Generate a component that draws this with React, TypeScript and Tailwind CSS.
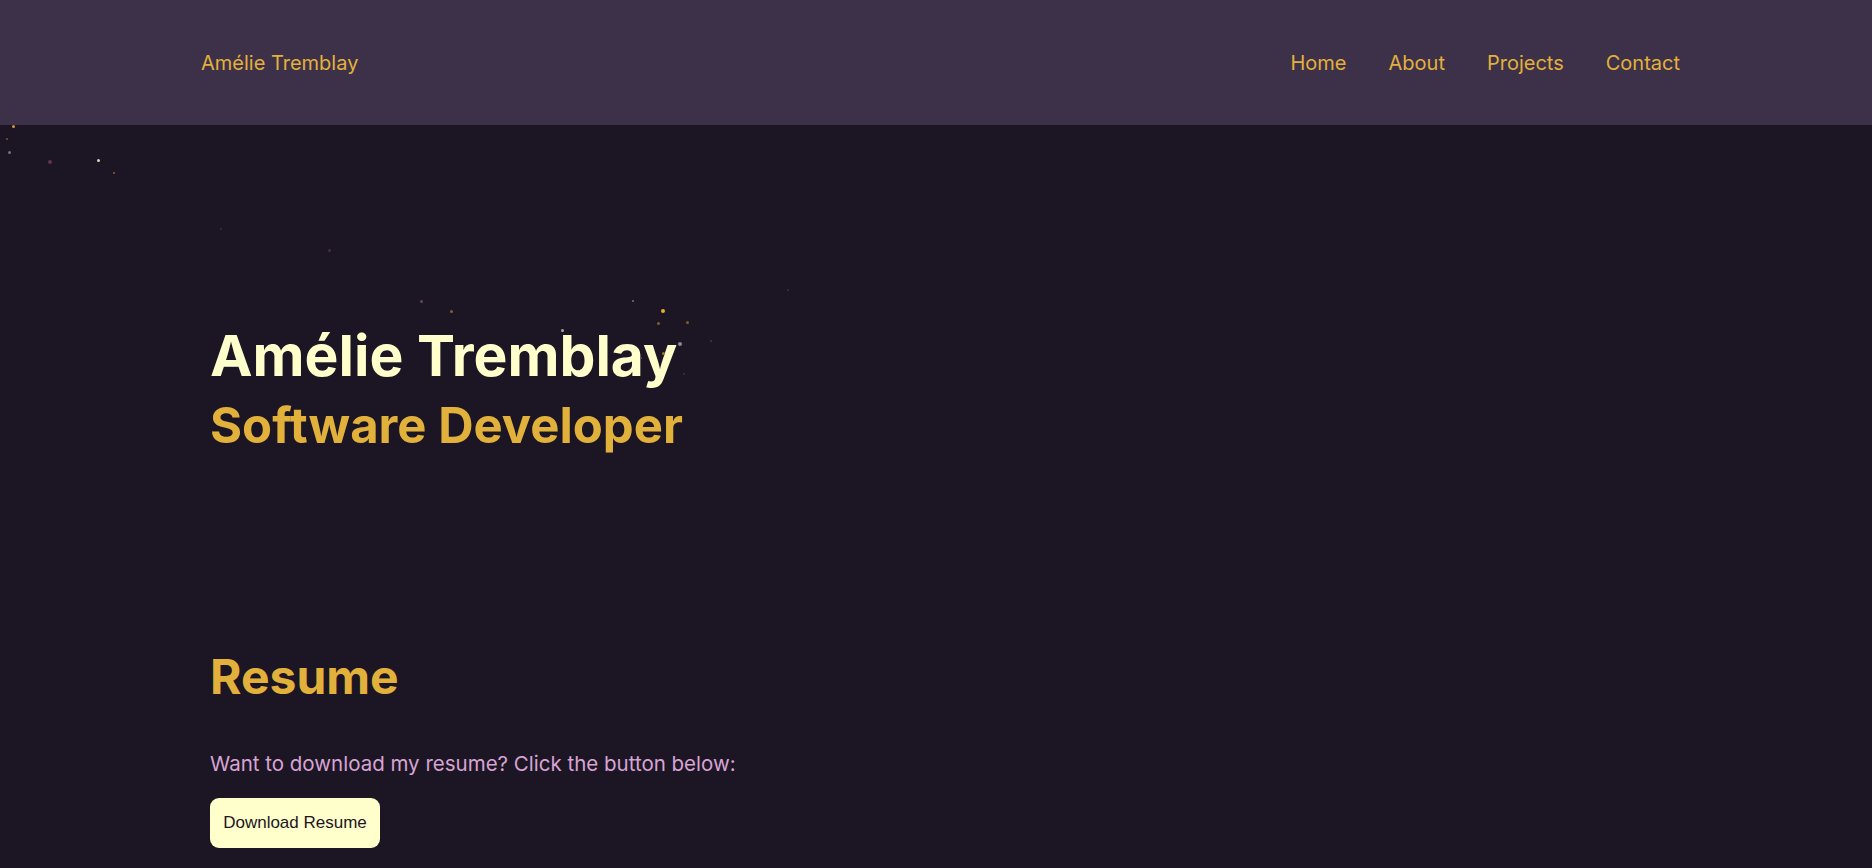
import React from "react";

const navLinks = ["Home", "About", "Projects", "Contact"];

// little dots from the particle canvas behind the hero
const particles: { x: number; y: number; s: number; c: string }[] = [
  { x: 12, y: 125, s: 3, c: "bg-[#c99a35]" },
  { x: 6, y: 138, s: 2, c: "bg-[#7a5a2a]" },
  { x: 8, y: 151, s: 3, c: "bg-[#77717a]" },
  { x: 48, y: 160, s: 4, c: "bg-[#5d3550]" },
  { x: 97, y: 159, s: 3, c: "bg-[#d9d6bb]" },
  { x: 113, y: 172, s: 2, c: "bg-[#8a6425]" },
  { x: 220, y: 228, s: 2, c: "bg-[#3b3148]" },
  { x: 328, y: 249, s: 3, c: "bg-[#4a2c43]" },
  { x: 420, y: 300, s: 3, c: "bg-[#6a4359]" },
  { x: 450, y: 310, s: 3, c: "bg-[#7d6027]" },
  { x: 632, y: 300, s: 2, c: "bg-[#77727a]" },
  { x: 661, y: 309, s: 4, c: "bg-[#e2ad33]" },
  { x: 657, y: 322, s: 3, c: "bg-[#7d6027]" },
  { x: 686, y: 321, s: 3, c: "bg-[#7d6027]" },
  { x: 678, y: 342, s: 4, c: "bg-[#8c8890]" },
  { x: 710, y: 340, s: 2, c: "bg-[#52392f]" },
  { x: 561, y: 329, s: 3, c: "bg-[#a9a7a0]" },
  { x: 662, y: 352, s: 3, c: "bg-[#a0772a]" },
  { x: 640, y: 357, s: 2, c: "bg-[#5a5560]" },
  { x: 683, y: 373, s: 2, c: "bg-[#3b3148]" },
  { x: 787, y: 289, s: 2, c: "bg-[#3b3148]" },
];

const Navbar = () => (
  <nav className="h-[125px] bg-[#3d3049] flex items-center justify-between pl-[201px] pr-[192px]">
    <a className="text-[20px] text-[#e2b13c]">Amélie Tremblay</a>
    <ul className="flex items-center gap-[42px]">
      {navLinks.map((link) => (
        <li key={link}>
          <a className="text-[20px] text-[#e2b13c]">{link}</a>
        </li>
      ))}
    </ul>
  </nav>
);

export default function App() {
  return (
    <div
      className="min-h-screen bg-[#1c1624] relative overflow-hidden"
      style={{ fontFamily: "Inter, 'Noto Sans', sans-serif" }}
    >
      <Navbar />
      <main className="pl-[210px]">
        <section className="pt-[202px]">
          <h1 className="text-[57px] leading-[57px] font-bold text-[#ffffcc]">
            Amélie Tremblay
          </h1>
          <h2 className="mt-[17px] text-[49px] leading-[49px] font-bold text-[#e2b13c]">
            Software Developer
          </h2>
        </section>
        <section className="mt-[203px] pb-10">
          <h2 className="text-[48px] leading-[48px] font-bold text-[#e2b13c]">
            Resume
          </h2>
          <p className="mt-[49px] text-[20.5px] leading-[28px] text-[#d8a4d4]">
            Want to download my resume? Click the button below:
          </p>
          <button
            className="mt-5 w-[170px] h-[50px] rounded-[9px] bg-[#ffffcc] text-[17px] text-[#1c1624]"
            style={{ fontFamily: "'Liberation Sans', Arial, sans-serif" }}
          >
            Download Resume
          </button>
        </section>
      </main>
      <div className="absolute inset-0 pointer-events-none">
        {particles.map((p, i) => (
          <span
            key={i}
            className={`absolute rounded-full ${p.c}`}
            style={{ left: p.x, top: p.y, width: p.s, height: p.s }}
          />
        ))}
      </div>
    </div>
  );
}
